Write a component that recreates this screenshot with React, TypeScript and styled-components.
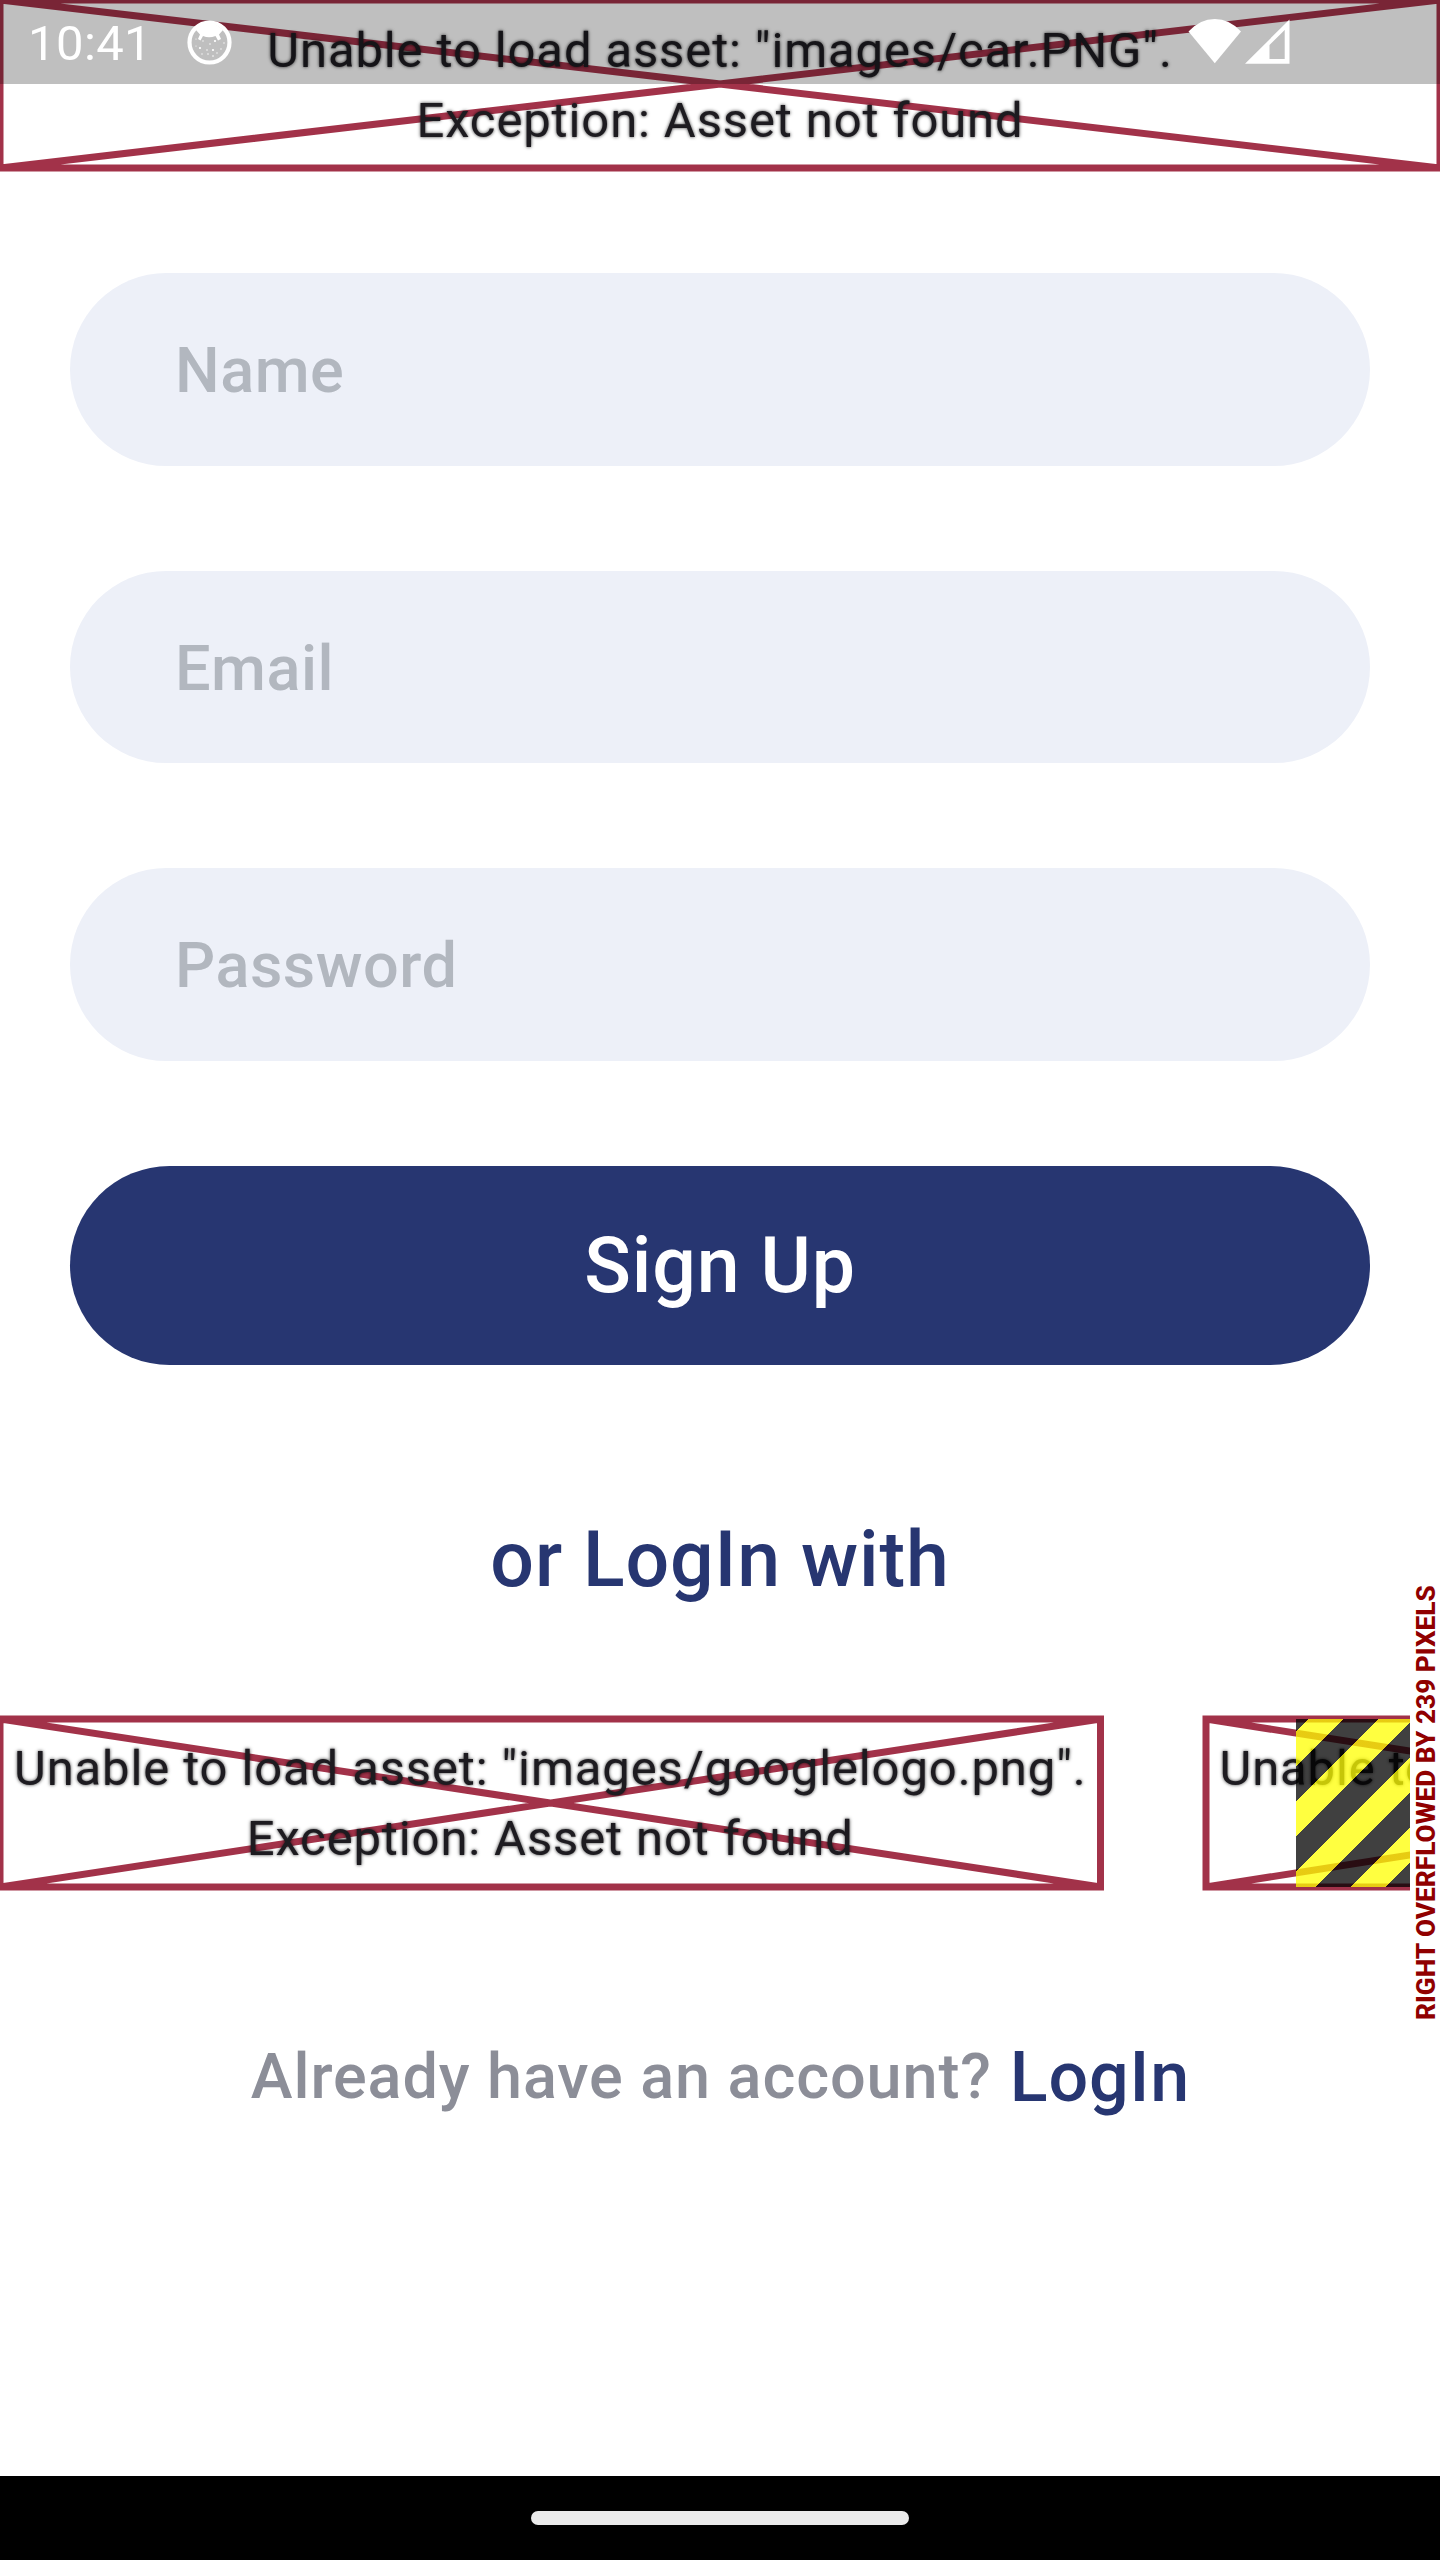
import React from "react";
import styled, { createGlobalStyle } from "styled-components";

const navy = "#273671";

const GlobalStyle = createGlobalStyle`
  *, *::before, *::after { box-sizing: border-box; }
  body { margin: 0; background: #fff; }
`;

const Screen = styled.div`
  position: relative;
  display: flex;
  flex-direction: column;
  width: 1440px;
  height: 2560px;
  overflow: hidden;
  background: #fff;
  font-family: Roboto, "Noto Sans", sans-serif;
`;

const StatusBar = styled.header`
  position: absolute;
  inset: 0 0 auto 0;
  z-index: 2;
  height: 84px;
  display: flex;
  align-items: flex-start;
  padding: 13px 150px 0 28px;
  background: rgba(0, 0, 0, 0.25);
`;

const Clock = styled.span`
  width: 159px;
  color: #fff;
  font-size: 49px;
  line-height: 62px;
  letter-spacing: 0.4px;
`;

const StatusIcons = styled.div`
  display: flex;
  gap: 3.5px;
  margin-left: auto;
`;

const DebugSvg = styled.svg`
  margin-top: 6px;
`;

const AssetBox = styled.div<{ $width: number; $start?: boolean }>`
  position: relative;
  flex: none;
  width: ${(p) => p.$width}px;
  height: 168px;
  padding: 15.5px 14px 12.5px;
  text-align: ${(p) => (p.$start ? "left" : "center")};
`;

const Cross = styled.svg`
  position: absolute;
  inset: 0;
  width: 100%;
  height: 100%;
  overflow: visible;
`;

const AssetLine = styled.div`
  position: relative;
  color: #1d1b20;
  font-size: 49px;
  line-height: 70px;
  letter-spacing: 0.875px;
  white-space: nowrap;
  text-shadow: 0 0 3.5px rgba(0, 0, 0, 0.8);
`;

const Form = styled.form`
  display: flex;
  flex-direction: column;
  gap: 105px;
  padding: 105px 70px 0;
`;

const Field = styled.input`
  display: block;
  width: 100%;
  height: 192.5px;
  margin: 0;
  padding: 3px 105px 0;
  border: 0;
  border-radius: 105px;
  background: #edf0f8;
  font-family: inherit;
  font-size: 63px;
  font-weight: 500;
  letter-spacing: 0.525px;
  color: #000;
  &::placeholder {
    color: #b2b7bf;
    opacity: 1;
  }
`;

const SubmitButton = styled.button`
  height: 199.5px;
  padding: 1px 0 0;
  border: 0;
  border-radius: 105px;
  background: ${navy};
  color: #fff;
  font-family: inherit;
  font-size: 77px;
  font-weight: 500;
  letter-spacing: 0.875px;
`;

const Divider = styled.h2`
  margin: 141px 0 0;
  color: ${navy};
  font-size: 77px;
  font-weight: 500;
  line-height: 108px;
  letter-spacing: 0.875px;
  text-align: center;
`;

const ProviderRow = styled.div`
  position: relative;
  width: 1440px;
  height: 168px;
  margin-top: 104.5px;
`;

const ProviderClip = styled.div`
  display: flex;
  gap: 105px;
  width: 1440px;
  height: 176px;
  margin-top: -4px;
  padding-top: 4px;
  overflow: hidden;
`;

const Hazard = styled.div`
  position: absolute;
  top: 0;
  right: 0;
  width: 144px;
  height: 168px;
  background: repeating-linear-gradient(
    135deg,
    rgba(0, 0, 0, 0.75) 0 9.19px,
    rgba(255, 255, 0, 0.75) 9.19px 33.94px,
    rgba(0, 0, 0, 0.75) 33.94px 49.497px
  );
`;

const OverflowLabel = styled.div`
  position: absolute;
  right: 0;
  top: 50%;
  width: 30px;
  height: 440px;
  transform: translateY(-50%) rotate(180deg);
  writing-mode: vertical-rl;
  text-align: center;
  background: #fff;
  color: #900000;
  font-size: 26.25px;
  font-weight: 800;
  line-height: 28px;
  white-space: nowrap;
  display: flex;
  flex-direction: column;
  align-items: center;
  justify-content: flex-end;
`;

const AccountRow = styled.p`
  display: flex;
  align-items: center;
  justify-content: center;
  gap: 18px;
  margin: 140px 0 0;
  padding-left: 1px;
  height: 100px;
  white-space: nowrap;
`;

const Prompt = styled.span`
  color: #8c8e98;
  font-size: 63px;
  font-weight: 500;
  letter-spacing: 0.875px;
`;

const LoginLink = styled.a`
  color: ${navy};
  font-size: 70px;
  font-weight: 500;
  letter-spacing: 0.875px;
`;

const NavigationBar = styled.footer`
  display: flex;
  justify-content: center;
  align-items: center;
  height: 84px;
  margin-top: auto;
  background: #000;
`;

const HomeHandle = styled.div`
  width: 378px;
  height: 14px;
  border-radius: 7px;
  background: #ebebeb;
`;

function MissingAsset({ width, lines, start }: { width: number; lines: string[]; start?: boolean }) {
  return (
    <AssetBox $width={width} $start={start}>
      <Cross viewBox={`0 0 ${width} 168`} preserveAspectRatio="none">
        <path
          d={`M0 0H${width}V168H0ZL${width} 168M${width} 0L0 168`}
          fill="none"
          stroke="#8d021f"
          strokeOpacity="0.81"
          strokeWidth="7"
        />
      </Cross>
      {lines.map((line) => (
        <AssetLine key={line}>{line}</AssetLine>
      ))}
    </AssetBox>
  );
}

const specks = [
  [8, 18, 0.7], [15, 20, 0.8], [27, 20, 1.4], [36, 22, 0.8], [22, 23, 0.9],
  [12, 27, 1.4], [19, 29, 0.9], [25, 29, 1.4], [33, 28, 0.8], [8, 25, 0.7],
  [14, 33, 0.8], [20, 33, 0.9], [25, 35, 1], [29, 32, 0.8],
];

function DebugIcon() {
  return (
    <DebugSvg width="46" height="46" viewBox="0 0 46 46">
      <circle cx="22.5" cy="23.5" r="20" fill="none" stroke="#fff" strokeWidth="4.2" />
      <path
        d="M9 11Q22-3 36 11L32 15.500L34 20L31 21.500L28.500 17Q22 19.500 16 17L13.500 21.500L11 20L13 15.500Z"
        fill="#fff"
      />
      {specks.map(([x, y, r]) => (
        <circle key={`${x}-${y}`} cx={x + 1} cy={y + 2} r={r * 0.8} fill="#fff" />
      ))}
    </DebugSvg>
  );
}

export default function App() {
  return (
    <>
      <GlobalStyle />
      <Screen>
        <StatusBar>
          <Clock>10:41</Clock>
          <DebugIcon />
          <StatusIcons>
            <svg width="54" height="52" viewBox="0 0 54 52">
              <path d="M0.500 18.500Q12 6 26.800 6T53 18.500L26.800 50.300Z" fill="#fff" />
            </svg>
            <svg width="45" height="52" viewBox="0 0 45 52">
              <path fillRule="evenodd" d="M0 50.700L44.500 6.500V50.700ZM24.500 32V46H39.700V17Z" fill="#fff" />
            </svg>
          </StatusIcons>
        </StatusBar>

        <MissingAsset
          width={1440}
          lines={['Unable to load asset: "images/car.PNG".', "Exception: Asset not found"]}
        />

        <Form onSubmit={(e) => e.preventDefault()}>
          <Field placeholder="Name" />
          <Field placeholder="Email" />
          <Field placeholder="Password" type="password" />
          <SubmitButton>Sign Up</SubmitButton>
        </Form>

        <Divider>or LogIn with</Divider>

        <ProviderRow>
          <ProviderClip>
            <MissingAsset
              width={1100.5}
              lines={['Unable to load asset: "images/googlelogo.png".', "Exception: Asset not found"]}
            />
            <MissingAsset width={1071} start lines={["Unable to"]} />
          </ProviderClip>
          <Hazard />
          <OverflowLabel>RIGHT OVERFLOWED BY 239 PIXELS</OverflowLabel>
        </ProviderRow>

        <AccountRow>
          <Prompt>Already have an account?</Prompt>
          <LoginLink>LogIn</LoginLink>
        </AccountRow>

        <NavigationBar>
          <HomeHandle />
        </NavigationBar>
      </Screen>
    </>
  );
}
